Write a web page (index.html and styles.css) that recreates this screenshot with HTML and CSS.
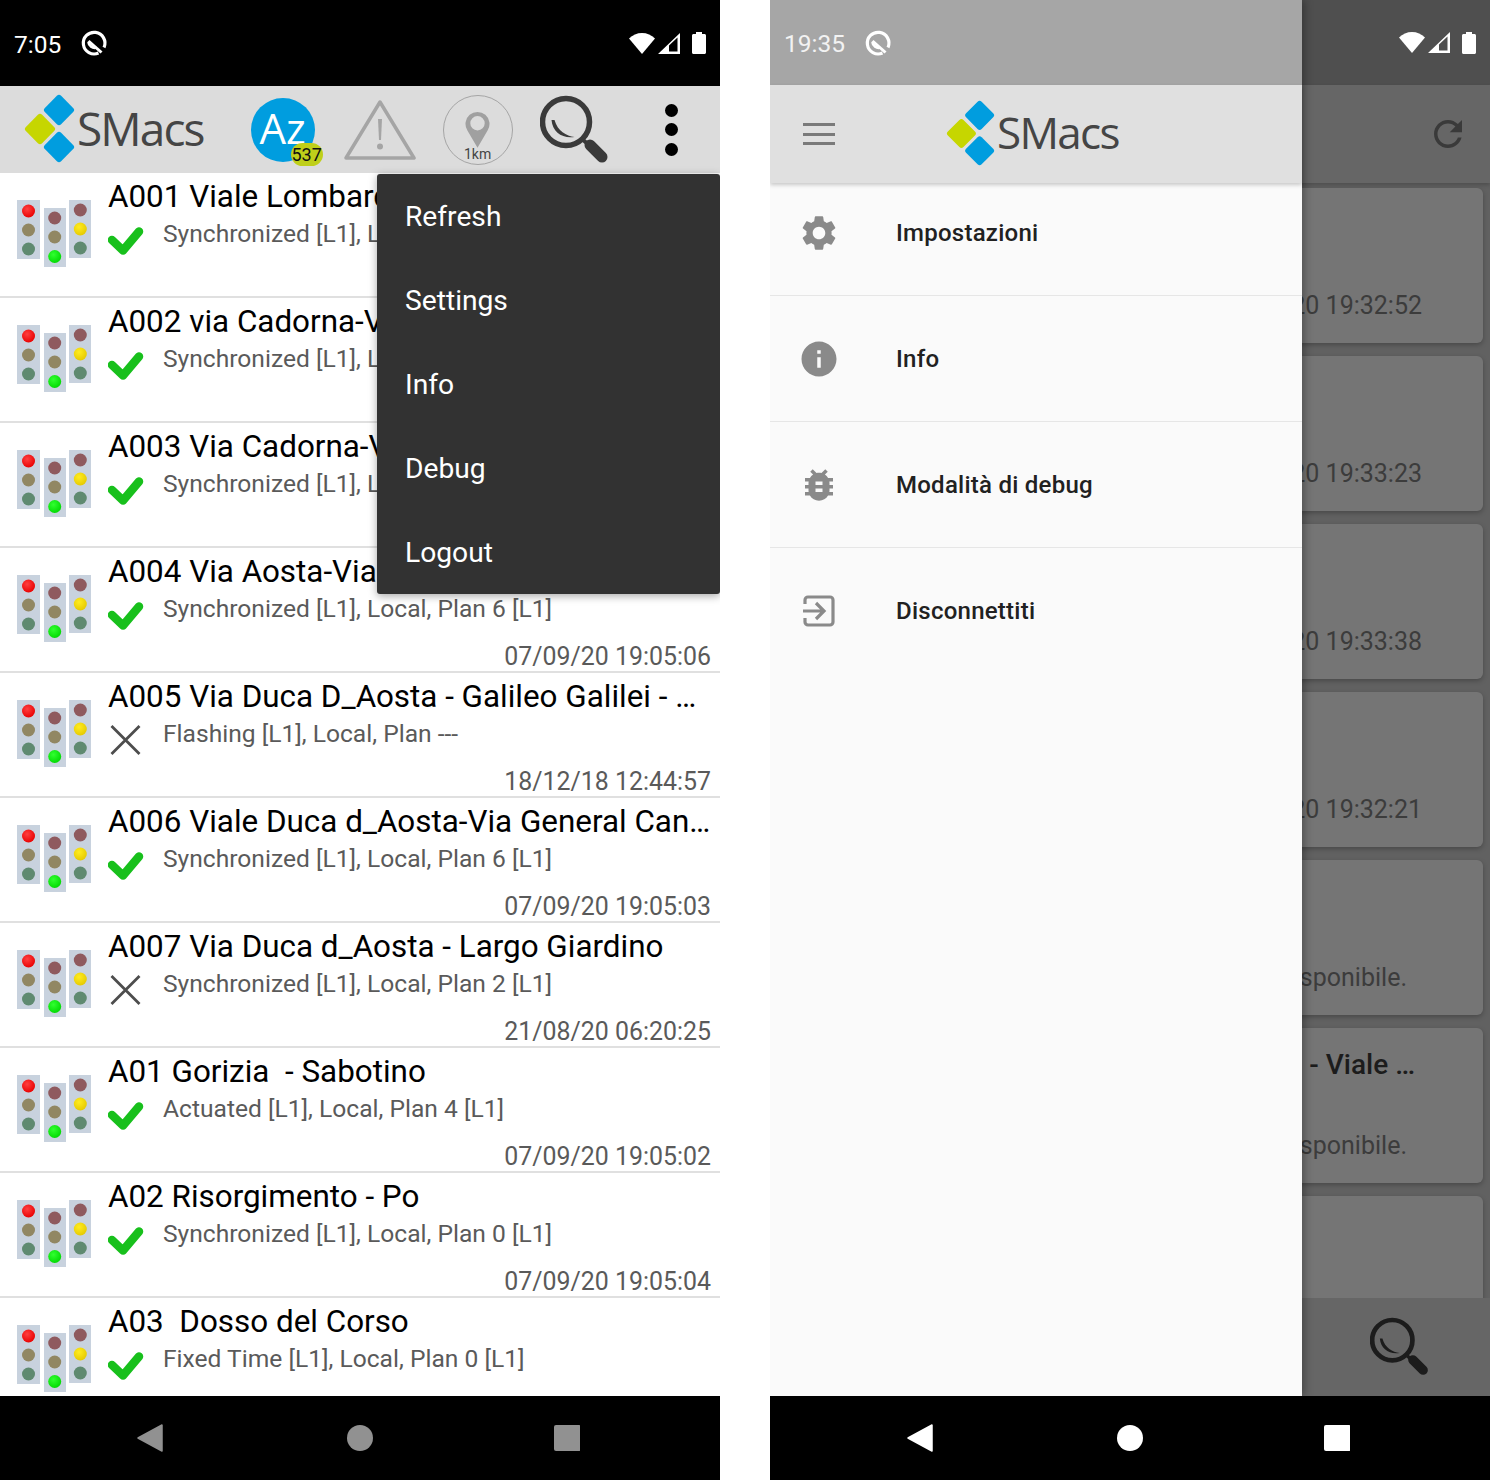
FILE: index.html
```html
<!DOCTYPE html>
<html lang="en">
<head>
    <meta charset="UTF-8">
    <meta name="viewport" content="width=device-width, initial-scale=1.0">
    <title>SMacs</title>
    <link rel="stylesheet" href="styles.css">
</head>
<body>
    <svg class="defs" width="0" height="0">
        <defs>
            <radialGradient id="gRed" cx="40%" cy="35%" r="70%"><stop offset="0" stop-color="#ff4040"/><stop offset="1" stop-color="#e80000"/></radialGradient>
            <radialGradient id="gGreen" cx="40%" cy="35%" r="70%"><stop offset="0" stop-color="#30ff30"/><stop offset="1" stop-color="#00d800"/></radialGradient>
            <radialGradient id="gYellow" cx="40%" cy="35%" r="70%"><stop offset="0" stop-color="#ffec20"/><stop offset="1" stop-color="#e4c800"/></radialGradient>
            <symbol id="lights" viewBox="0 0 74 67">
                <rect x="0" y="0" width="23" height="59" fill="#c8d2de"/>
                <rect x="27" y="8" width="22" height="59" fill="#c8d2de"/>
                <rect x="52" y="0" width="22" height="58" fill="#c8d2de"/>
                <circle cx="11.5" cy="11" r="6.5" fill="url(#gRed)"/>
                <circle cx="11.5" cy="30" r="6.5" fill="#918762"/>
                <circle cx="11.5" cy="49" r="6.5" fill="#5f8a70"/>
                <circle cx="37.7" cy="18" r="6.5" fill="#8f5a5e"/>
                <circle cx="37.7" cy="37" r="6.5" fill="#918762"/>
                <circle cx="37.7" cy="56.5" r="6.5" fill="url(#gGreen)"/>
                <circle cx="63.3" cy="10" r="6.5" fill="#8f5a5e"/>
                <circle cx="63.3" cy="29" r="6.5" fill="url(#gYellow)"/>
                <circle cx="63.3" cy="48" r="6.5" fill="#5f8a70"/>
            </symbol>
            <symbol id="check" viewBox="0 0 36 30">
                <path d="M4 15 15 25.500 31 6.500" fill="none" stroke="#18c01c" stroke-width="8.500" stroke-linejoin="round" stroke-linecap="round"/>
            </symbol>
            <symbol id="cross" viewBox="0 0 36 30">
                <path d="M3.500 1 31.500 29M31.500 1 3.500 29" fill="none" stroke="#4d4d4d" stroke-width="2.800"/>
            </symbol>
            <symbol id="diamonds" viewBox="0 0 52 72">
                <rect x="-11.500" y="-11.500" width="23" height="23" rx="3" transform="translate(35 16) rotate(45)" fill="#009ddf"/>
                <rect x="-11.500" y="-11.500" width="23" height="23" rx="3" transform="translate(16 35) rotate(45)" fill="#c6d600"/>
                <rect x="-11.500" y="-11.500" width="23" height="23" rx="3" transform="translate(35 53) rotate(45)" fill="#009ddf"/>
            </symbol>
            <symbol id="saver" viewBox="0 0 28 28">
                <path d="M18.500 24A10.800 10.800 0 1 1 24 18.500" fill="none" stroke="currentColor" stroke-width="3.200"/>
                <path d="M8.500 12 21.500 23.500" fill="none" stroke="currentColor" stroke-width="3"/>
                <path d="M8.500 13c.5 4 4 6.500 8 5.500" fill="none" stroke="currentColor" stroke-width="2.800"/>
            </symbol>
            <symbol id="wifi" viewBox="0 0 26 21">
                <path d="M0 5.500C3.500 2 8 0 13 0s9.500 2 13 5.500L13 21z" fill="#fff"/>
            </symbol>
            <symbol id="signal" viewBox="0 0 22 21">
                <path d="M0 21 22 0v21zM11 18.500h8.500V4.500L11 12.500z" fill="#fff" fill-rule="evenodd"/>
            </symbol>
            <symbol id="battery" viewBox="0 0 14 22">
                <path d="M4 0h6v2h2.500c.8 0 1.500.7 1.500 1.500v17c0 .8-.7 1.500-1.500 1.500h-11C.7 22 0 21.300 0 20.500v-17C0 2.700.7 2 1.500 2H4z" fill="#fff"/>
            </symbol>
            <symbol id="lens" viewBox="0 0 70 70">
                <circle cx="26" cy="27" r="23.500" fill="none" stroke="currentColor" stroke-width="5.500"/>
                <path d="M11.500 25c1 12 11 19 23 17-8-1-17-6-20-17z" fill="currentColor"/>
                <path d="M42 44 50 51" fill="none" stroke="currentColor" stroke-width="4"/>
                <path d="M50 50 62 62" fill="none" stroke="currentColor" stroke-width="11" stroke-linecap="round"/>
            </symbol>
        </defs>
    </svg>

    <div class="phone">
        <div class="status">
            <span class="clock">7:05</span>
            <svg class="saver"><use href="#saver"/></svg>
            <span class="status-right">
                <svg class="ico-wifi"><use href="#wifi"/></svg>
                <svg class="ico-signal"><use href="#signal"/></svg>
                <svg class="ico-battery"><use href="#battery"/></svg>
            </span>
        </div>

        <div class="toolbar">
            <div class="logo">
                <svg class="logo-mark"><use href="#diamonds"/></svg>
                <span class="logo-text">SMacs</span>
            </div>
            <div class="az">
                <span>Az</span>
                <span class="badge">537</span>
            </div>
            <svg class="warn" viewBox="0 0 72 62">
                <path d="M36 3 70 59H2z" fill="none" stroke="#a5a5a5" stroke-width="3.500" stroke-linejoin="round"/>
                <path d="M34 20h4l-1 21h-2z" fill="#a5a5a5"/>
                <circle cx="36" cy="47.500" r="3" fill="#a5a5a5"/>
            </svg>
            <div class="gps">
                <svg class="pin" viewBox="0 0 26 38">
                    <path fill-rule="evenodd" d="M13 38 2.500 20A12.500 12.500 0 1 1 23.500 20zM13 20a7.500 7.500 0 1 0 0-15 7.500 7.500 0 0 0 0 15z" fill="#a0a0a0"/>
                </svg>
                <span class="gps-label">1km</span>
            </div>
            <svg class="lens"><use href="#lens"/></svg>
            <div class="dots"><i></i><i></i><i></i></div>
        </div>

        <div class="list">
            <div class="row">
                <svg class="lights"><use href="#lights"/></svg>
                <div class="info">
                    <div class="title">A001 Viale Lombardia</div>
                    <div class="line"><svg class="state"><use href="#check"/></svg><span class="sub">Synchronized [L1], Local, Plan 6 [L1]</span></div>
                    <div class="date">07/09/20 19:05:01</div>
                </div>
            </div>
            <div class="row">
                <svg class="lights"><use href="#lights"/></svg>
                <div class="info">
                    <div class="title">A002 via Cadorna-Viale</div>
                    <div class="line"><svg class="state"><use href="#check"/></svg><span class="sub">Synchronized [L1], Local, Plan 6 [L1]</span></div>
                    <div class="date">07/09/20 19:05:02</div>
                </div>
            </div>
            <div class="row">
                <svg class="lights"><use href="#lights"/></svg>
                <div class="info">
                    <div class="title">A003 Via Cadorna-Viale</div>
                    <div class="line"><svg class="state"><use href="#check"/></svg><span class="sub">Synchronized [L1], Local, Plan 6 [L1]</span></div>
                    <div class="date">07/09/20 19:05:03</div>
                </div>
            </div>
            <div class="row">
                <svg class="lights"><use href="#lights"/></svg>
                <div class="info">
                    <div class="title">A004 Via Aosta-Via</div>
                    <div class="line"><svg class="state"><use href="#check"/></svg><span class="sub">Synchronized [L1], Local, Plan 6 [L1]</span></div>
                    <div class="date">07/09/20 19:05:06</div>
                </div>
            </div>
            <div class="row">
                <svg class="lights"><use href="#lights"/></svg>
                <div class="info">
                    <div class="title">A005 Via Duca D_Aosta - Galileo Galilei - …</div>
                    <div class="line"><svg class="state"><use href="#cross"/></svg><span class="sub">Flashing [L1], Local, Plan ---</span></div>
                    <div class="date">18/12/18 12:44:57</div>
                </div>
            </div>
            <div class="row">
                <svg class="lights"><use href="#lights"/></svg>
                <div class="info">
                    <div class="title">A006 Viale Duca d_Aosta-Via General Can…</div>
                    <div class="line"><svg class="state"><use href="#check"/></svg><span class="sub">Synchronized [L1], Local, Plan 6 [L1]</span></div>
                    <div class="date">07/09/20 19:05:03</div>
                </div>
            </div>
            <div class="row">
                <svg class="lights"><use href="#lights"/></svg>
                <div class="info">
                    <div class="title">A007 Via Duca d_Aosta - Largo Giardino</div>
                    <div class="line"><svg class="state"><use href="#cross"/></svg><span class="sub">Synchronized [L1], Local, Plan 2 [L1]</span></div>
                    <div class="date">21/08/20 06:20:25</div>
                </div>
            </div>
            <div class="row">
                <svg class="lights"><use href="#lights"/></svg>
                <div class="info">
                    <div class="title">A01 Gorizia &nbsp;- Sabotino</div>
                    <div class="line"><svg class="state"><use href="#check"/></svg><span class="sub">Actuated [L1], Local, Plan 4 [L1]</span></div>
                    <div class="date">07/09/20 19:05:02</div>
                </div>
            </div>
            <div class="row">
                <svg class="lights"><use href="#lights"/></svg>
                <div class="info">
                    <div class="title">A02 Risorgimento - Po</div>
                    <div class="line"><svg class="state"><use href="#check"/></svg><span class="sub">Synchronized [L1], Local, Plan 0 [L1]</span></div>
                    <div class="date">07/09/20 19:05:04</div>
                </div>
            </div>
            <div class="row">
                <svg class="lights"><use href="#lights"/></svg>
                <div class="info">
                    <div class="title">A03 &nbsp;Dosso del Corso</div>
                    <div class="line"><svg class="state"><use href="#check"/></svg><span class="sub">Fixed Time [L1], Local, Plan 0 [L1]</span></div>
                </div>
            </div>
        </div>

        <div class="nav nav-dim">
            <svg viewBox="0 0 26 28"><path d="M25 1v26L1 14z" fill="currentColor" stroke="currentColor" stroke-width="1.500" stroke-linejoin="round"/></svg>
            <svg viewBox="0 0 26 28"><circle cx="13" cy="14" r="13" fill="currentColor"/></svg>
            <svg viewBox="0 0 26 28"><rect x="0" y="1" width="27" height="26" rx="2" fill="currentColor"/></svg>
        </div>

        <div class="menu">
            <div class="menu-item">Refresh</div>
            <div class="menu-item">Settings</div>
            <div class="menu-item">Info</div>
            <div class="menu-item">Debug</div>
            <div class="menu-item">Logout</div>
        </div>
    </div>

    <div class="phone">
        <div class="status status-back">
            <span class="status-right">
                <svg class="ico-wifi"><use href="#wifi"/></svg>
                <svg class="ico-signal"><use href="#signal"/></svg>
                <svg class="ico-battery"><use href="#battery"/></svg>
            </span>
        </div>
        <div class="toolbar-back">
            <svg class="refresh" viewBox="0 0 24 24"><path d="M17.650 6.350C16.200 4.900 14.210 4 12 4c-4.420 0-7.990 3.580-7.990 8s3.570 8 7.990 8c3.730 0 6.840-2.550 7.730-6h-2.080c-.82 2.330-3.040 4-5.650 4-3.310 0-6-2.690-6-6s2.690-6 6-6c1.660 0 3.140.69 4.220 1.780L13 11h7V4l-2.350 2.350z" fill="currentColor"/></svg>
        </div>
        <div class="cards">
            <div class="card"><span class="card-date">07/09/20 19:32:52</span></div>
            <div class="card"><span class="card-date">07/09/20 19:33:23</span></div>
            <div class="card"><span class="card-date">07/09/20 19:33:38</span></div>
            <div class="card"><span class="card-date">07/09/20 19:32:21</span></div>
            <div class="card"><span class="card-note">Non disponibile.</span></div>
            <div class="card"><span class="card-title">- Viale …</span><span class="card-note">Non disponibile.</span></div>
            <div class="card"></div>
        </div>
        <div class="search-bar"><svg class="lens-small"><use href="#lens"/></svg></div>
        <div class="nav">
            <svg viewBox="0 0 26 28"><path d="M25 1v26L1 14z" fill="currentColor" stroke="currentColor" stroke-width="1.500" stroke-linejoin="round"/></svg>
            <svg viewBox="0 0 26 28"><circle cx="13" cy="14" r="13" fill="currentColor"/></svg>
            <svg viewBox="0 0 26 28"><rect x="0" y="1" width="27" height="26" rx="2" fill="currentColor"/></svg>
        </div>

        <div class="drawer">
            <div class="drawer-status">
                <span class="clock">19:35</span>
                <svg class="saver"><use href="#saver"/></svg>
            </div>
            <div class="drawer-head">
                <div class="burger"><i></i><i></i><i></i></div>
                <div class="logo logo-drawer">
                    <svg class="logo-mark"><use href="#diamonds"/></svg>
                    <span class="logo-text">SMacs</span>
                </div>
            </div>
            <div class="drawer-item drawer-first">
                <span class="drawer-icon"><svg viewBox="0 0 24 24"><path d="M19.140 12.940c.04-.3.06-.61.06-.94 0-.32-.02-.64-.07-.94l2.030-1.580c.18-.14.23-.41.12-.61l-1.920-3.320c-.12-.22-.37-.29-.59-.22l-2.390.96c-.5-.38-1.030-.7-1.620-.94l-.36-2.540c-.04-.24-.24-.41-.48-.41h-3.840c-.24 0-.43.17-.47.41l-.36 2.540c-.59.24-1.130.57-1.620.94l-2.390-.96c-.22-.08-.47 0-.59.22L2.740 8.870c-.12.21-.08.47.12.61l2.030 1.580c-.05.3-.09.63-.09.94s.02.64.07.94l-2.030 1.580c-.18.14-.23.41-.12.61l1.920 3.320c.12.22.37.29.59.22l2.390-.96c.5.38 1.030.7 1.620.94l.36 2.540c.05.24.24.41.48.41h3.840c.24 0 .44-.17.47-.41l.36-2.540c.59-.24 1.130-.56 1.620-.94l2.390.96c.22.08.47 0 .59-.22l1.920-3.320c.12-.22.07-.47-.12-.61l-2.010-1.580zM12 15.600c-1.980 0-3.600-1.620-3.600-3.600s1.620-3.600 3.600-3.600 3.600 1.620 3.600 3.600-1.620 3.600-3.600 3.600z"/></svg></span>
                Impostazioni
            </div>
            <div class="drawer-item">
                <span class="drawer-icon"><svg viewBox="0 0 24 24"><path d="M12 2C6.480 2 2 6.480 2 12s4.480 10 10 10 10-4.480 10-10S17.520 2 12 2zm1 15h-2v-6h2v6zm0-8h-2V7h2v2z"/></svg></span>
                Info
            </div>
            <div class="drawer-item">
                <span class="drawer-icon"><svg viewBox="0 0 24 24"><path d="M20 8h-2.810c-.45-.78-1.070-1.450-1.820-1.960L17 4.410 15.590 3l-2.170 2.170C12.960 5.060 12.490 5 12 5c-.49 0-.96.06-1.410.17L8.410 3 7 4.410l1.620 1.630C7.880 6.550 7.260 7.220 6.810 8H4v2h2.090c-.05.33-.09.66-.09 1v1H4v2h2v1c0 .34.04.67.09 1H4v2h2.810c1.040 1.790 2.970 3 5.190 3s4.150-1.210 5.190-3H20v-2h-2.090c.05-.33.09-.66.09-1v-1h2v-2h-2v-1c0-.34-.04-.67-.09-1H20V8zm-6 8h-4v-2h4v2zm0-4h-4v-2h4v2z"/></svg></span>
                Modalità di debug
            </div>
            <div class="drawer-item drawer-last">
                <span class="drawer-icon"><svg class="exit" viewBox="0 0 32 32"><path d="M2 9V5a3 3 0 0 1 3-3h22a3 3 0 0 1 3 3v22a3 3 0 0 1-3 3H5a3 3 0 0 1-3-3v-4M0 16h21M13 8l8 8-8 8" fill="none" stroke="#8a8a8a" stroke-width="3.200"/></svg></span>
                Disconnettiti
            </div>
        </div>
    </div>
</body>
</html>
```

FILE: styles.css
```css
html, body {
    margin: 0;
    padding: 0;
}

body {
    width: 1490px;
    height: 1480px;
    display: flex;
    gap: 50px;
    background-color: #fff;
    font-family: Roboto, sans-serif;
    overflow: hidden;
}

.defs {
    position: absolute;
}

.phone {
    position: relative;
    width: 720px;
    height: 1480px;
    display: flex;
    flex-direction: column;
    overflow: hidden;
}

/* status bar */
.status {
    height: 86px;
    flex: none;
    display: flex;
    align-items: center;
    padding: 0 14px;
    box-sizing: border-box;
    background-color: #000;
    color: #fff;
}

.status-back {
    height: 85px;
    background-color: #4f4f4f;
}

.clock {
    padding-top: 2px;
    font-size: 24.500px;
    color: #fff;
}

.saver {
    width: 28px;
    height: 28px;
    margin-left: 19px;
    color: #fff;
}

.status-right {
    margin-left: auto;
    display: flex;
    align-items: center;
}

.ico-wifi {
    width: 26px;
    height: 21px;
}

.ico-signal {
    width: 22px;
    height: 21px;
    margin-left: 3px;
}

.ico-battery {
    width: 14px;
    height: 22px;
    margin-left: 12px;
}

/* top toolbar */
.toolbar {
    height: 87px;
    flex: none;
    display: flex;
    align-items: center;
    background-color: #dcdcdc;
}

.logo {
    display: flex;
    align-items: center;
    color: #454545;
}

.logo-mark {
    width: 52px;
    height: 72px;
    margin-left: 24px;
}

.logo-text {
    margin-left: 1px;
    padding-bottom: 4px;
    font-family: "Open Sans", sans-serif;
    font-size: 46px;
    letter-spacing: -1.900px;
    line-height: 1;
}

.az {
    position: relative;
    width: 64px;
    height: 64px;
    margin-left: 47px;
    flex: none;
    border-radius: 50%;
    background-color: #009ddf;
    color: #fff;
    font-family: "Open Sans", sans-serif;
    font-size: 42px;
    line-height: 60px;
    text-align: center;
}

.badge {
    position: absolute;
    left: 40px;
    top: 45px;
    width: 32px;
    height: 23px;
    border-radius: 12px;
    background-color: #bfcf1a;
    color: #111;
    font-family: Roboto, sans-serif;
    font-size: 18px;
    line-height: 23px;
}

.warn {
    width: 72px;
    height: 62px;
    margin-left: 29px;
    flex: none;
}

.gps {
    position: relative;
    width: 68px;
    height: 68px;
    margin-left: 27px;
    flex: none;
    border: 1px solid #a5a5a5;
    border-radius: 50%;
    text-align: center;
}

.pin {
    display: block;
    width: 25px;
    height: 37px;
    margin: 15px auto 0;
}

.gps-label {
    position: absolute;
    left: 0;
    right: 0;
    bottom: 2px;
    font-size: 14px;
    line-height: 16px;
    color: #444;
}

.lens {
    width: 70px;
    height: 70px;
    margin-left: 27px;
    flex: none;
    color: #3a3a3a;
}

.dots {
    margin-left: 55px;
    display: flex;
    flex-direction: column;
    gap: 6.500px;
}

.dots i {
    display: block;
    width: 13px;
    height: 13px;
    border-radius: 50%;
    background-color: #000;
}

/* controller list */
.list {
    flex: 1;
    min-height: 0;
    overflow: hidden;
    background-color: #fff;
}

.row {
    height: 125px;
    box-sizing: border-box;
    display: flex;
    padding-left: 17px;
    border-bottom: 2px solid #e0e0e0;
}

.lights {
    width: 74px;
    height: 67px;
    margin-top: 27px;
    flex: none;
}

.info {
    flex: 1;
    min-width: 0;
    margin-left: 17px;
    padding-top: 1px;
}

.title {
    height: 46px;
    font-size: 31.400px;
    line-height: 46px;
    white-space: nowrap;
    color: #000;
}

.line {
    height: 30px;
    display: flex;
    align-items: flex-start;
    white-space: nowrap;
}

.state {
    width: 36px;
    height: 30px;
    margin-top: 5px;
    flex: none;
}

.sub {
    margin-left: 19px;
    margin-top: -1px;
    font-size: 24.600px;
    line-height: 30px;
    color: #5a5a5a;
}

.date {
    margin-top: 17px;
    padding-right: 9px;
    font-size: 24.900px;
    line-height: 30px;
    text-align: right;
    color: #5a5a5a;
}

/* bottom nav */
.nav {
    height: 84px;
    flex: none;
    box-sizing: border-box;
    display: flex;
    align-items: center;
    justify-content: center;
    gap: 181px;
    background-color: #000;
    color: #fff;
}

.nav-dim {
    color: #919191;
}

.nav svg {
    width: 26px;
    height: 28px;
}

.nav svg:first-child {
    margin-left: -3px;
    margin-right: 3px;
}

/* overflow menu */
.menu {
    position: absolute;
    left: 377px;
    top: 174px;
    width: 343px;
    background-color: #323232;
    border-radius: 3px;
    box-shadow: 0 2px 8px rgba(0, 0, 0, 0.35);
}

.menu-item {
    height: 84px;
    padding-left: 28px;
    font-size: 28.200px;
    line-height: 86px;
    color: #fff;
}

/* dimmed screen behind the drawer */
.toolbar-back {
    height: 98px;
    flex: none;
    display: flex;
    align-items: center;
    justify-content: flex-end;
    background-color: #666;
    box-shadow: 0 2px 4px rgba(0, 0, 0, 0.2);
    position: relative;
    padding-right: 21px;
}

.refresh {
    width: 42px;
    height: 42px;
    color: #3a3a3a;
}

.cards {
    flex: 1;
    min-height: 0;
    overflow: hidden;
    display: flex;
    flex-direction: column;
    gap: 13px;
    padding: 5px 7px 0 0;
    background-color: #616161;
}

.card {
    height: 155px;
    flex: none;
    position: relative;
    display: flex;
    flex-direction: column;
    align-items: flex-end;
    justify-content: flex-end;
    border-radius: 6px;
    background-color: #757575;
    box-shadow: 0 2px 5px rgba(0, 0, 0, 0.25);
}

.card-date {
    padding-right: 61px;
    font-size: 25px;
    line-height: 30px;
    margin-bottom: 22px;
    color: #3c3c3c;
}

.card-note {
    padding-right: 76px;
    font-size: 25px;
    line-height: 30px;
    margin-bottom: 22px;
    color: #3c3c3c;
}

.card-title {
    position: absolute;
    top: 19px;
    right: 68px;
    font-size: 28px;
    font-weight: 500;
    line-height: 36px;
    color: #1c1c1c;
}

.search-bar {
    height: 98px;
    flex: none;
    display: flex;
    align-items: center;
    justify-content: flex-end;
    padding-right: 60px;
    background-color: #666;
}

.lens-small {
    width: 60px;
    height: 60px;
    color: #1c1c1c;
}

/* navigation drawer */
.drawer {
    position: absolute;
    left: 0;
    top: 0;
    bottom: 84px;
    width: 532px;
    background-color: #fafafa;
    box-shadow: 3px 0 8px rgba(0, 0, 0, 0.3);
}

.drawer-status {
    height: 85px;
    display: flex;
    align-items: center;
    padding: 0 14px;
    box-sizing: border-box;
    background-color: #a6a6a6;
}

.drawer-status .clock {
    color: #f2f2f2;
}

.drawer-head {
    position: relative;
    height: 98px;
    display: flex;
    align-items: center;
    background-color: #e0e0e0;
    box-shadow: 0 2px 4px rgba(0, 0, 0, 0.2);
}

.burger {
    width: 32px;
    margin-left: 33px;
    display: flex;
    flex-direction: column;
    gap: 6.500px;
}

.burger i {
    display: block;
    height: 3px;
    background-color: #7a7a7a;
}

.logo-drawer {
    margin-left: 111px;
}

.logo-drawer .logo-mark {
    width: 50px;
    height: 69px;
    margin-left: 0;
}

.logo-drawer .logo-text {
    font-size: 44px;
    letter-spacing: -1.700px;
    margin-left: 1px;
}

.drawer-item {
    height: 126px;
    box-sizing: border-box;
    display: flex;
    align-items: center;
    border-bottom: 1px solid #e6e6e6;
    font-size: 24px;
    font-weight: 500;
    letter-spacing: 0.25px;
    color: #212121;
}

.drawer-first {
    height: 113px;
    padding-bottom: 12px;
}

.drawer-last {
    border-bottom: none;
}

.drawer-icon {
    width: 126px;
    flex: none;
    display: flex;
    justify-content: center;
    padding-right: 28px;
    box-sizing: border-box;
}

.drawer-icon svg {
    width: 42px;
    height: 42px;
    fill: #8a8a8a;
}

.drawer-icon .exit {
    width: 32px;
    height: 32px;
}
```
